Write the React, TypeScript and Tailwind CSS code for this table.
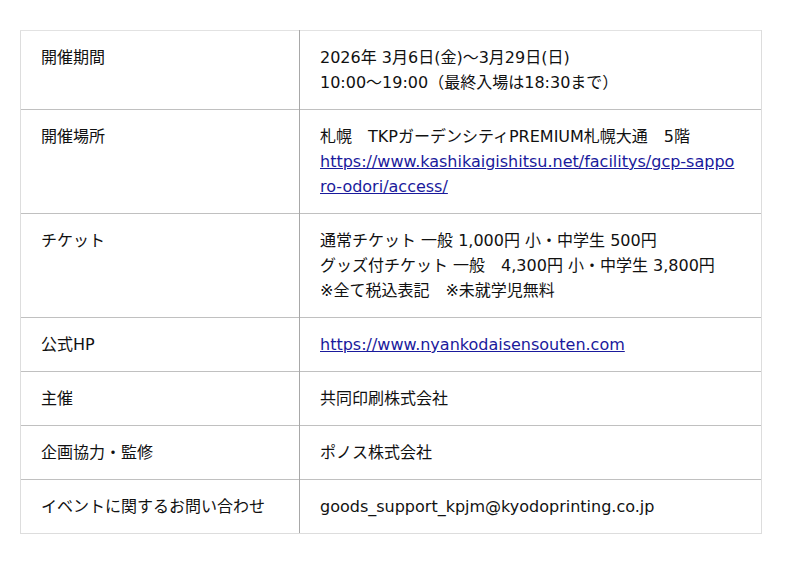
import React from "react";

const rows: { label: string; content: React.ReactNode }[] = [
  {
    label: "開催期間",
    content: (
      <>
        <div>2026年 3月6日(金)〜3月29日(日)</div>
        <div>10:00〜19:00（最終入場は18:30まで）</div>
      </>
    ),
  },
  {
    label: "開催場所",
    content: (
      <>
        <div>札幌　TKPガーデンシティPREMIUM札幌大通　5階</div>
        <a href="#" className="underline text-[#1a1a9c] break-all">
          https://www.kashikaigishitsu.net/facilitys/gcp-sapporo-odori/access/
        </a>
      </>
    ),
  },
  {
    label: "チケット",
    content: (
      <>
        <div>通常チケット 一般 1,000円 小・中学生 500円</div>
        <div>グッズ付チケット 一般　4,300円 小・中学生 3,800円</div>
        <div>※全て税込表記　※未就学児無料</div>
      </>
    ),
  },
  {
    label: "公式HP",
    content: (
      <a href="#" className="underline text-[#1a1a9c]">
        https://www.nyankodaisensouten.com
      </a>
    ),
  },
  { label: "主催", content: <div>共同印刷株式会社</div> },
  { label: "企画協力・監修", content: <div>ポノス株式会社</div> },
  {
    label: "イベントに関するお問い合わせ",
    content: <div>goods_support_kpjm@kyodoprinting.co.jp</div>,
  },
];

export default function App() {
  return (
    <div
      className="w-[800px] h-[564px] bg-white pt-[30px] pl-[20px] text-[16px] leading-[25px] text-[#111]"
      style={{ fontFamily: '"DejaVu Sans", "Noto Sans CJK JP", sans-serif' }}
    >
      <table className="w-[742px] border-collapse">
        <tbody>
          {rows.map((r, i) => (
            <tr key={r.label}>
              <td
                className={
                  "w-[279px] border-l border-l-[#dddddd] border-r border-r-[#a8a8a8] border-t px-[20px] py-[14px] align-top " +
                  (i === 0 ? "border-t-[#e2e2e2] " : "border-t-[#c0c0c0] ") +
                  (i === rows.length - 1 ? "border-b border-b-[#dddddd]" : "")
                }
              >
                {r.label}
              </td>
              <td
                className={
                  "border-r border-r-[#dddddd] border-t pl-[20px] pr-[22px] py-[14px] align-top " +
                  (i === 0 ? "border-t-[#e2e2e2] " : "border-t-[#c0c0c0] ") +
                  (i === rows.length - 1 ? "border-b border-b-[#dddddd]" : "")
                }
              >
                {r.content}
              </td>
            </tr>
          ))}
        </tbody>
      </table>
    </div>
  );
}
